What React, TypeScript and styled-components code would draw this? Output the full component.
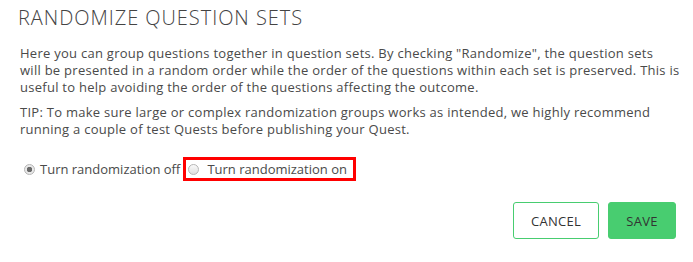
import React, { useState } from 'react';
import styled, { createGlobalStyle } from 'styled-components';

const GlobalStyle = createGlobalStyle`
  html, body {
    margin: 0;
    padding: 0;
    background: #fff;
  }
  body {
    font-family: 'Open Sans', 'Liberation Sans', sans-serif;
    color: #4a4a4a;
  }
`;

const App: React.FC = () => {
  const [randomize, setRandomize] = useState(false);

  return (
    <Dialog>
      <GlobalStyle />
      <Title>RANDOMIZE QUESTION SETS</Title>
      <Paragraph>
        Here you can group questions together in question sets. By checking
        "Randomize", the question sets
        <br />
        will be presented in a random order while the order of the questions
        within each set is preserved. This is
        <br />
        useful to help avoiding the order of the questions affecting the
        outcome.
      </Paragraph>
      <Paragraph>
        TIP: To make sure large or complex randomization groups works as
        intended, we highly recommend
        <br />
        running a couple of test Quests before publishing your Quest.
      </Paragraph>
      <Options>
        <Option>
          <Radio checked={!randomize} onClick={() => setRandomize(false)} />
          Turn randomization off
        </Option>
        <Option highlighted>
          <Radio checked={randomize} onClick={() => setRandomize(true)} />
          Turn randomization on
        </Option>
      </Options>
      <Actions>
        <CancelButton type="button">CANCEL</CancelButton>
        <SaveButton type="button">SAVE</SaveButton>
      </Actions>
    </Dialog>
  );
};

export default App;

const Dialog = styled.div`
  width: 693px;
  height: 262px;
  box-sizing: border-box;
  padding: 6px 17px 0 20px;
`;

const Title = styled.h1`
  margin: 0 0 0 -2px;
  font-size: 20px;
  font-weight: 300;
  letter-spacing: 0.95px;
  line-height: 24px;
  color: #444;
`;

const Paragraph = styled.p`
  margin: 15px 0 0;
  font-size: 13px;
  line-height: 17px;
  letter-spacing: 0.27px;
  white-space: nowrap;

  & + & {
    margin-top: 8px;
  }
`;

const Options = styled.div`
  display: flex;
  align-items: center;
  margin-top: 19px;
  margin-left: 1px;
  font-size: 13px;
`;

const Option = styled.label<{ highlighted?: boolean }>`
  display: flex;
  align-items: center;
  gap: ${({ highlighted }) => (highlighted ? '8px' : '5px')};
  height: 18px;
  padding: ${({ highlighted }) => (highlighted ? '0 6px 0 2px' : '0')};
  border: 3px solid ${({ highlighted }) => (highlighted ? '#ff0000' : 'transparent')};
  cursor: pointer;
`;

const Radio = styled.span<{ checked: boolean }>`
  width: 11px;
  height: 11px;
  border-radius: 50%;
  box-sizing: border-box;
  border: 1px solid #b5b5b5;
  background: ${({ checked }) =>
    checked
      ? 'radial-gradient(circle, #6a6a6a 0 2.5px, #e9e9e9 3px)'
      : 'linear-gradient(#fafafa, #dedede)'};
  flex-shrink: 0;
`;

const Actions = styled.div`
  display: flex;
  justify-content: flex-end;
  gap: 9px;
  margin-top: 21px;
`;

const BaseButton = styled.button`
  height: 37px;
  border-radius: 3px;
  font-family: inherit;
  font-size: 13px;
  letter-spacing: 0.3px;
  color: #333;
  cursor: pointer;
`;

const CancelButton = styled(BaseButton)`
  width: 86px;
  background: #fff;
  border: 1px solid #48cd70;
`;

const SaveButton = styled(BaseButton)`
  width: 68px;
  background: #48cd70;
  border: 1px solid #48cd70;
`;
